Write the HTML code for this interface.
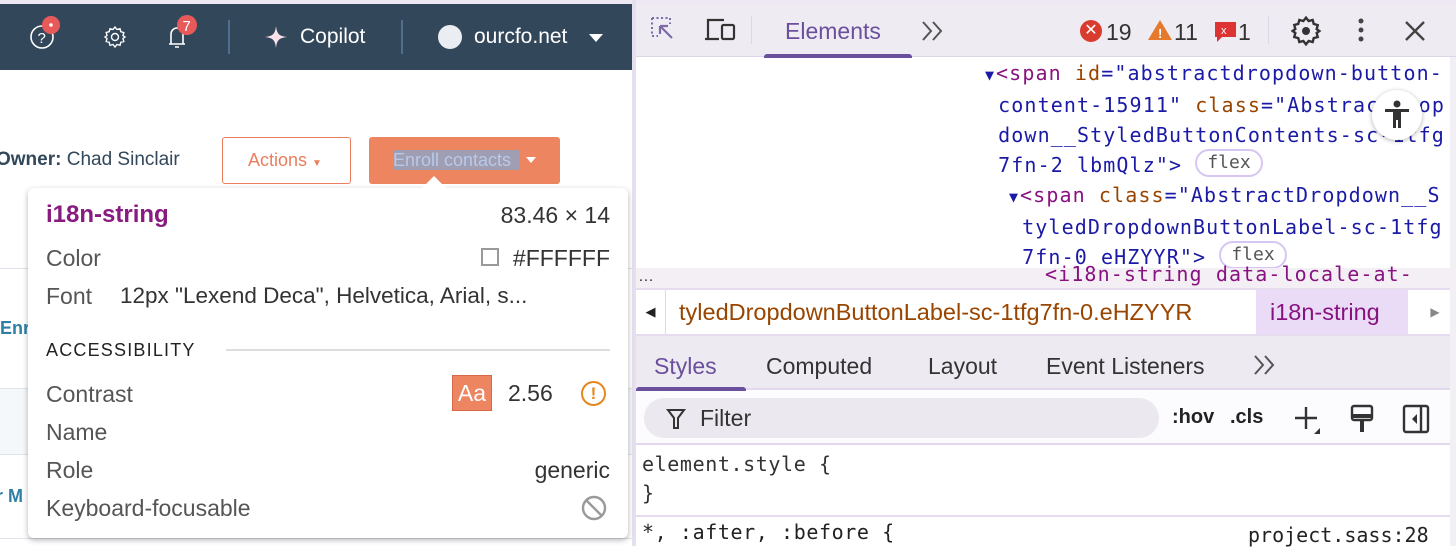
<!DOCTYPE html>
<html><head><meta charset="utf-8"><style>
*{box-sizing:border-box;margin:0;padding:0}
body{width:1456px;height:546px;overflow:hidden;background:#fff;font-family:"Liberation Sans",Arial,sans-serif;position:relative}
.abs{position:absolute}
.mono{font-family:"DejaVu Sans Mono","Liberation Mono",monospace;letter-spacing:1.1px}
</style></head><body>
<div class="abs" style="left:0;top:0;width:1456px;height:4px;background:#ede8f3"></div>
<div class="abs" style="left:0;top:4px;width:632px;height:66px;background:#33475b"></div>
<div class="abs" style="left:632px;top:0;width:4px;height:546px;background:#e6e0ee"></div>
<svg class="abs" style="left:28px;top:14px" width="50" height="40"><circle cx="14" cy="23" r="11" fill="none" stroke="#fff" stroke-width="1.6"/><text x="9.5" y="29" fill="#fff" font-size="15" font-family="Liberation Sans">?</text><circle cx="23" cy="11" r="9" fill="#e85a5a"/><circle cx="23" cy="11" r="1.8" fill="#fff"/></svg>
<svg class="abs" style="left:103px;top:25px" width="24" height="24" viewBox="0 0 24 24"><path d="M12 2l2 2.5 3-.8.8 3 3 .9-.8 3L22 12l-2 1.5.8 3-3 .8-.8 3-3-.8L12 22l-2-2.5-3 .8-.8-3-3-.8.8-3L2 12l2-1.5-.8-3 3-.8.8-3 3 .8z" fill="none" stroke="#fff" stroke-width="1.4"/><circle cx="12" cy="12" r="3.5" fill="none" stroke="#fff" stroke-width="1.4"/></svg>
<svg class="abs" style="left:163px;top:12px" width="40" height="38"><path d="M6 32h16M8 32V22a6 6 0 0112 0v10M12 35h4" fill="none" stroke="#fff" stroke-width="1.6"/><circle cx="24" cy="13" r="10" fill="#e85a5a"/><text x="19.5" y="19" fill="#fff" font-size="15" font-family="Liberation Sans">7</text></svg>
<div class="abs" style="left:228px;top:20px;width:2px;height:34px;background:#506e8d"></div>
<svg class="abs" style="left:264px;top:25px" width="24" height="24"><path d="M12 1C13 9 15 11 23 12 15 13 13 15 12 23 11 15 9 13 1 12 9 11 11 9 12 1z" fill="#fbe1ea"/></svg>
<div class="abs" style="left:300px;top:25px;color:#fff;font-size:21px">Copilot</div>
<div class="abs" style="left:401px;top:20px;width:2px;height:34px;background:#506e8d"></div>
<div class="abs" style="left:438px;top:25px;width:24px;height:24px;border-radius:50%;background:#eaeef2"></div>
<div class="abs" style="left:474px;top:25px;color:#fff;font-size:21px">ourcfo.net</div>
<div class="abs" style="left:589px;top:34px;width:0;height:0;border-left:7px solid transparent;border-right:7px solid transparent;border-top:8px solid #fff"></div>
<div class="abs" style="left:-4px;top:149px;font-size:19px;color:#33475b"><b>Owner:</b> Chad Sinclair</div>
<div class="abs" style="left:222px;top:137px;width:129px;height:47px;border:1px solid #ea7e5c;border-radius:3px;color:#ea7e5c;font-size:18px;line-height:45px;padding-left:25px">Actions <span style="font-size:10px">▼</span></div>
<div class="abs" style="left:369px;top:137px;width:191px;height:47px;background:#ee8561;border-radius:3px"></div>
<div class="abs" style="left:393px;top:150px;height:20px;width:126px;background:#9f9eb3;color:#b8c9ea;font-size:18px;line-height:20px;white-space:nowrap;overflow:visible">Enroll contacts</div>
<div class="abs" style="left:526px;top:157px;width:0;height:0;border-left:5px solid transparent;border-right:5px solid transparent;border-top:6px solid #fff"></div>
<div class="abs" style="left:0;top:268px;width:632px;height:1px;background:#dfe3eb"></div>
<div class="abs" style="left:0;top:318px;color:#2d7fa6;font-size:18px;font-weight:bold">Enr</div>
<div class="abs" style="left:0;top:388px;width:632px;height:67px;background:#f5f8fa;border-top:1px solid #dfe3eb;border-bottom:1px solid #dfe3eb"></div>
<div class="abs" style="left:-4px;top:486px;color:#2d7fa6;font-size:18px;font-weight:bold">r M</div>
<div class="abs" style="left:0;top:538px;width:632px;height:1px;background:#dfe3eb"></div>
<div class="abs" style="left:28px;top:188px;width:600px;height:350px;background:#fff;border-radius:6px;box-shadow:0 2px 6px rgba(0,0,0,.3)"></div>
<div class="abs" style="left:422px;top:176px;width:0;height:0;border-left:12px solid transparent;border-right:12px solid transparent;border-bottom:12px solid #fff"></div>
<div class="abs" style="left:46px;top:201px;font-size:24px;font-weight:bold;color:#881a80">i18n-string</div>
<div class="abs" style="right:846px;top:202px;font-size:23px;color:#333">83.46 × 14</div>
<div class="abs" style="left:46px;top:245px;font-size:23px;color:#555">Color</div>
<div class="abs" style="left:481px;top:248px;width:18px;height:18px;border:2px solid #999"></div>
<div class="abs" style="right:846px;top:245px;font-size:23px;color:#333">#FFFFFF</div>
<div class="abs" style="left:46px;top:283px;font-size:23px;color:#555">Font</div>
<div class="abs" style="left:120px;top:283px;font-size:22.5px;color:#333;white-space:nowrap">12px "Lexend Deca", Helvetica, Arial, s...</div>
<div class="abs" style="left:46px;top:340px;font-size:18px;letter-spacing:1.2px;color:#222">ACCESSIBILITY</div>
<div class="abs" style="left:226px;top:349px;width:384px;height:2px;background:#ddd"></div>
<div class="abs" style="left:46px;top:381px;font-size:23px;color:#555">Contrast</div>
<div class="abs" style="left:452px;top:375px;width:40px;height:36px;background:#ee8561;border:1px solid #d66a48;color:#fff;font-size:23px;text-align:center;line-height:34px">Aa</div>
<div class="abs" style="left:508px;top:380px;font-size:23px;color:#333">2.56</div>
<div class="abs" style="left:581px;top:381px;width:25px;height:25px;border:2px solid #e6861e;border-radius:50%;color:#e6861e;font-size:17px;text-align:center;line-height:21px;font-weight:bold">!</div>
<div class="abs" style="left:46px;top:419px;font-size:23px;color:#555">Name</div>
<div class="abs" style="left:46px;top:457px;font-size:23px;color:#555">Role</div>
<div class="abs" style="right:846px;top:457px;font-size:23px;color:#333">generic</div>
<div class="abs" style="left:46px;top:495px;font-size:23px;color:#555">Keyboard-focusable</div>
<svg class="abs" style="left:580px;top:494px" width="28" height="28"><circle cx="14" cy="14" r="11" fill="none" stroke="#999" stroke-width="2.4"/><path d="M6 6l16 16" stroke="#999" stroke-width="2.4"/></svg>

<div class="abs" style="left:636px;top:4px;width:820px;height:53px;background:#efebf3;border-bottom:1px solid #ddd6e6"></div>
<svg class="abs" style="left:650px;top:16px" width="32" height="30"><path d="M2 2h18v6M2 2v18h6" fill="none" stroke="#7a6aa8" stroke-width="2" stroke-dasharray="2 2.5"/><path d="M10 10l12 12M10 10h8M10 10v8" fill="none" stroke="#7a6aa8" stroke-width="2.2"/></svg>
<svg class="abs" style="left:704px;top:17px" width="36" height="26"><path d="M4 22V3h16M1 22h14" fill="none" stroke="#333" stroke-width="2.2"/><rect x="18" y="8" width="12" height="14" rx="1.5" fill="none" stroke="#333" stroke-width="2.2"/></svg>
<div class="abs" style="left:751px;top:16px;width:1px;height:28px;background:#ddd6e6"></div>
<div class="abs" style="left:785px;top:18px;font-size:23px;color:#6a4f9c">Elements</div>
<div class="abs" style="left:764px;top:54px;width:148px;height:4px;background:#6a4f9c;border-radius:3px 3px 0 0"></div>
<svg class="abs" style="left:920px;top:20px" width="26" height="22"><path d="M3 2l8 9-8 9M13 2l8 9-8 9" fill="none" stroke="#555" stroke-width="2"/></svg>
<div class="abs" style="left:1080px;top:20px;width:22px;height:22px;border-radius:50%;background:#d93c2e;color:#fff;font-size:16px;text-align:center;line-height:22px">✕</div>
<div class="abs" style="left:1106px;top:19px;font-size:23px;color:#333">19</div>
<svg class="abs" style="left:1147px;top:19px" width="26" height="22"><path d="M13 1L25 21H1z" fill="#e57a2c"/><text x="11" y="19" fill="#fff" font-size="13" font-weight="bold" font-family="Liberation Sans">!</text></svg>
<div class="abs" style="left:1174px;top:19px;font-size:23px;color:#333">11</div>
<svg class="abs" style="left:1214px;top:21px" width="24" height="22"><path d="M1 1h21v15H8l-5 5v-5H1z" fill="#d33"/><text x="7" y="13" fill="#fff" font-size="11" font-family="Liberation Sans">x</text></svg>
<div class="abs" style="left:1238px;top:19px;font-size:23px;color:#333">1</div>
<div class="abs" style="left:1268px;top:16px;width:1px;height:28px;background:#ddd6e6"></div>
<svg class="abs" style="left:1290px;top:15px" width="32" height="32" viewBox="0 0 24 24"><path d="M12 2l2 2.5 3-.8.8 3 3 .9-.8 3L22 12l-2 1.5.8 3-3 .8-.8 3-3-.8L12 22l-2-2.5-3 .8-.8-3-3-.8.8-3L2 12l2-1.5-.8-3 3-.8.8-3 3 .8z" fill="none" stroke="#333" stroke-width="1.8"/><circle cx="12" cy="12" r="3" fill="#333"/></svg>
<svg class="abs" style="left:1354px;top:18px" width="14" height="26"><circle cx="7" cy="3" r="2.5" fill="#444"/><circle cx="7" cy="12" r="2.5" fill="#444"/><circle cx="7" cy="21" r="2.5" fill="#444"/></svg>
<svg class="abs" style="left:1404px;top:20px" width="22" height="22"><path d="M2 2l18 18M20 2L2 20" stroke="#444" stroke-width="2.4"/></svg>
<div class="abs mono" style="left:985px;top:58px;font-size:20px;line-height:30px;color:#1a1aa6;white-space:pre"><span style="font-size:15px;letter-spacing:2px">▼</span><span style="color:#881280">&lt;span</span> <span style="color:#994500">id</span>="abstractdropdown-button-
 content-15911" <span style="color:#994500">class</span>="AbstractDrop
 down__StyledButtonContents-sc-1tfg
 7fn-2 lbmQlz"&gt;</div>
<div class="abs mono" style="left:1195px;top:149px;width:68px;height:28px;border:2px solid #d7c6f3;border-radius:14px;font-size:18px;letter-spacing:0;color:#555;text-align:center;line-height:24px">flex</div>
<div class="abs mono" style="left:1009px;top:180px;font-size:20px;line-height:30px;color:#1a1aa6;white-space:pre"><span style="font-size:15px;letter-spacing:2px">▼</span><span style="color:#881280">&lt;span</span> <span style="color:#994500">class</span>="AbstractDropdown__S
 tyledDropdownButtonLabel-sc-1tfg
 7fn-0 eHZYYR"&gt;</div>
<div class="abs mono" style="left:1219px;top:241px;width:68px;height:28px;border:2px solid #d7c6f3;border-radius:14px;font-size:18px;letter-spacing:0;color:#555;text-align:center;line-height:24px">flex</div>
<div class="abs" style="left:1372px;top:90px;width:50px;height:50px;border-radius:50%;background:#fff;box-shadow:0 1px 5px rgba(0,0,0,.3)"></div>
<svg class="abs" style="left:1380px;top:98px" width="34" height="34"><circle cx="17" cy="6" r="3.5" fill="#333"/><path d="M5 11h24v3h-8v16h-3v-8h-2v8h-3V14H5z" fill="#333"/></svg>
<div class="abs" style="left:636px;top:268px;width:820px;height:20px;background:#f4eff5;overflow:hidden"></div>
<div class="abs" style="left:638px;top:268px;font-size:16px;color:#333">…</div>
<div class="abs mono" style="left:1045px;top:262px;height:24px;overflow:hidden;font-size:20px;color:#881280;white-space:pre">&lt;i18n-string data-locale-at-</div>
<div class="abs" style="left:636px;top:288px;width:820px;height:48px;background:#fff;border-top:2px solid #e6dcf0;border-bottom:2px solid #e6dcf0"></div>
<div class="abs" style="left:636px;top:290px;width:30px;height:44px;border-right:1px solid #ddd;font-size:13px;line-height:44px;text-align:center;color:#222">◀</div>
<div class="abs" style="left:679px;top:299px;font-size:23.5px;color:#994500;white-space:nowrap">tyledDropdownButtonLabel-sc-1tfg7fn-0.eHZYYR</div>
<div class="abs" style="left:1256px;top:290px;width:152px;height:44px;background:#eadcf6"></div>
<div class="abs" style="left:1270px;top:299px;font-size:23.5px;color:#881280">i18n-string</div>
<div class="abs" style="left:1414px;top:290px;width:42px;height:44px;font-size:12px;line-height:44px;text-align:center;color:#888">▶</div>
<div class="abs" style="left:636px;top:336px;width:820px;height:54px;background:#eeeaf2;border-bottom:2px solid #e2d9ee"></div>
<div class="abs" style="left:654px;top:353px;font-size:23px;color:#6a4f9c">Styles</div>
<div class="abs" style="left:636px;top:387px;width:110px;height:4px;background:#6a4f9c;border-radius:3px 3px 0 0"></div>
<div class="abs" style="left:766px;top:353px;font-size:23px;color:#333">Computed</div>
<div class="abs" style="left:928px;top:353px;font-size:23px;color:#333">Layout</div>
<div class="abs" style="left:1046px;top:353px;font-size:23px;color:#333">Event Listeners</div>
<svg class="abs" style="left:1252px;top:354px" width="26" height="22"><path d="M3 2l8 9-8 9M13 2l8 9-8 9" fill="none" stroke="#555" stroke-width="2"/></svg>
<div class="abs" style="left:636px;top:391px;width:820px;height:54px;background:#fcfbfe;border-bottom:2px solid #e2d9ee"></div>
<div class="abs" style="left:644px;top:398px;width:515px;height:40px;border-radius:20px;background:#ece8f0"></div>
<svg class="abs" style="left:666px;top:408px" width="20" height="22"><path d="M2 2h16l-6 8v10h-4V10z" fill="none" stroke="#333" stroke-width="2"/></svg>
<div class="abs" style="left:700px;top:405px;font-size:23px;color:#333">Filter</div>
<div class="abs" style="left:1172px;top:406px;font-size:20px;color:#222;font-weight:bold">:hov</div>
<div class="abs" style="left:1230px;top:406px;font-size:20px;color:#222;font-weight:bold">.cls</div>
<svg class="abs" style="left:1292px;top:404px" width="36" height="32"><path d="M14 3v22M3 14h22" stroke="#333" stroke-width="2.4"/><path d="M28 24v6h-6z" fill="#333"/></svg>
<svg class="abs" style="left:1350px;top:404px" width="24" height="32"><rect x="2" y="2" width="20" height="14" rx="2" fill="none" stroke="#333" stroke-width="2.4"/><path d="M2 12h20M12 16v12" stroke="#333" stroke-width="4"/></svg>
<svg class="abs" style="left:1402px;top:404px" width="30" height="30"><rect x="2" y="2" width="24" height="26" rx="2" fill="none" stroke="#333" stroke-width="2.4"/><path d="M19 2v26" stroke="#333" stroke-width="2.4"/><path d="M15 10v10l-5-5z" fill="#333"/></svg>
<div class="abs mono" style="left:642px;top:450px;font-size:20px;line-height:29px;color:#333;white-space:pre;letter-spacing:0.6px">element.style {
}</div>
<div class="abs" style="left:636px;top:515px;width:820px;height:2px;background:#e6dcf0"></div>
<div class="abs mono" style="left:642px;top:520px;font-size:20px;color:#222;white-space:pre;letter-spacing:0.6px">*, :after, :before {</div>
<div class="abs mono" style="left:1248px;top:523px;font-size:20px;color:#222;letter-spacing:0">project.sass:28</div>
<div class="abs" style="left:1450px;top:57px;width:6px;height:489px;background:#f2f0f4"></div>
</body></html>
